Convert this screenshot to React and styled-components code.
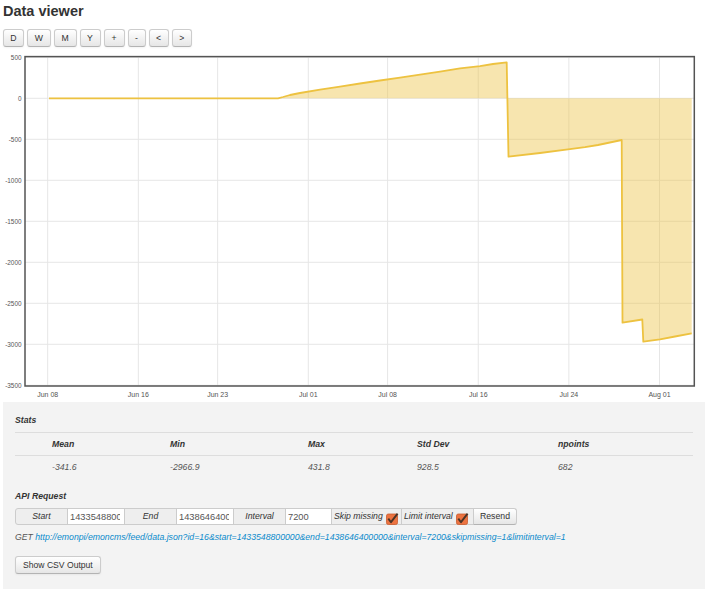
import React from "react";
import styled, { createGlobalStyle } from "styled-components";

const GlobalStyle = createGlobalStyle`
  html, body { margin: 0; padding: 0; background: #fff; overflow: hidden; }
  body { font-family: "Liberation Sans", Arial, sans-serif; color: #333; }
`;

const Page = styled.div`
  width: 709px;
  height: 589px;
  box-sizing: border-box;
  padding: 0 4px 0 3px;
  display: flex;
  flex-direction: column;
`;

const Title = styled.h2`
  margin: 0;
  font-size: 14.5px;
  line-height: 22px;
  font-weight: bold;
  color: #333;
`;

const Toolbar = styled.div`
  display: flex;
  gap: 3px;
  margin-top: 7px;
  height: 18px;
`;

const RangeButton = styled.button`
  box-sizing: border-box;
  width: ${(p) => p.$w}px;
  height: 18px;
  padding: 0;
  margin: 0;
  font: 8.7px/16px "Liberation Sans", Arial, sans-serif;
  color: #333;
  background: linear-gradient(#ffffff, #e6e6e6);
  border: 1px solid #ccc;
  border-bottom-color: #b3b3b3;
  border-radius: 3px;
  box-shadow: inset 0 1px 0 rgba(255, 255, 255, 0.2), 0 1px 2px rgba(0, 0, 0, 0.05);
`;

const ChartSvg = styled.svg`
  display: block;
  width: 702px;
  height: 355px;
  flex: none;
`;

const Panel = styled.div`
  flex: 1;
  background: #f3f3f3;
  padding: 12px 12px 0;
  display: flex;
  flex-direction: column;
  align-items: flex-start;
`;

const SectionLabel = styled.div`
  font-size: 8.7px;
  line-height: 12px;
  font-weight: bold;
  font-style: italic;
  color: #333;
  margin-top: ${(p) => p.$top || 0}px;
`;

const StatsTable = styled.div`
  align-self: stretch;
  display: grid;
  grid-template-columns: 29px 118px 138px 109px 141px 1fr;
  margin-top: 6px;
`;

const StatsCell = styled.div`
  box-sizing: border-box;
  height: 23px;
  border-top: 1px solid #ddd;
  padding-left: 8px;
  font-size: 8.7px;
  line-height: 22px;
  font-style: italic;
  font-weight: ${(p) => (p.$head ? "bold" : "normal")};
  color: ${(p) => (p.$head ? "#333" : "#555")};
  white-space: nowrap;
`;

const RequestRow = styled.div`
  display: flex;
  margin-top: 6px;
  height: 17px;
  && > * + * {
    margin-left: -1px;
  }
`;

const AddOn = styled.div`
  box-sizing: border-box;
  width: ${(p) => p.$w}px;
  height: 17px;
  background: #eee;
  border: 1px solid #ccc;
  border-radius: ${(p) => (p.$first ? "3px 0 0 3px" : "0")};
  font-size: 8.7px;
  line-height: 15px;
  font-style: italic;
  color: #333;
  text-align: center;
`;

const CheckAddOn = styled(AddOn)`
  display: flex;
  align-items: flex-start;
  gap: 3px;
  padding-left: 2px;
  text-align: left;
  white-space: nowrap;
  overflow: visible;
`;

const CheckBox = styled.svg`
  width: 12px;
  height: 12px;
  margin-top: 4px;
  flex: none;
  overflow: visible;
`;

const Field = styled.input`
  box-sizing: border-box;
  width: ${(p) => p.$w}px;
  height: 17px;
  padding: 0 4px 0 2px;
  border: 1px solid #ccc;
  border-radius: 0;
  background: #fff;
  font: 9.3px/15px "Liberation Sans", Arial, sans-serif;
  color: #555;
  outline: none;
`;

const ResendButton = styled.button`
  box-sizing: border-box;
  width: 44px;
  height: 17px;
  padding: 0;
  border: 1px solid #ccc;
  border-bottom-color: #b3b3b3;
  border-radius: 0 3px 3px 0;
  background: linear-gradient(#ffffff, #e6e6e6);
  font: 8.7px/15px "Liberation Sans", Arial, sans-serif;
  color: #333;
`;

const RequestLine = styled.div`
  margin-top: 6px;
  font-size: 8.7px;
  line-height: 12px;
  font-style: italic;
  color: #555;
  white-space: nowrap;
`;

const Link = styled.a`
  color: #0a8acb;
  text-decoration: none;
`;

const CsvButton = styled.button`
  box-sizing: border-box;
  height: 18px;
  margin: 13px 0 0;
  padding: 0 7px;
  border: 1px solid #ccc;
  border-bottom-color: #b3b3b3;
  border-radius: 3px;
  background: linear-gradient(#ffffff, #e6e6e6);
  box-shadow: inset 0 1px 0 rgba(255, 255, 255, 0.2), 0 1px 2px rgba(0, 0, 0, 0.05);
  font: 8.6px/16px "Liberation Sans", Arial, sans-serif;
  color: #333;
`;

const buttons = [
  ["D", 21],
  ["W", 23.5],
  ["M", 23],
  ["Y", 21],
  ["+", 21],
  ["-", 18],
  ["<", 20],
  [">", 20.5],
];

const yTicks = [500, 0, -500, -1000, -1500, -2000, -2500, -3000, -3500];
const yOf = (v) => 98.3 - v * 0.082;
const xTicks = [
  ["Jun 08", 0],
  ["Jun 16", 8],
  ["Jun 23", 15],
  ["Jul 01", 23],
  ["Jul 08", 30],
  ["Jul 16", 38],
  ["Jul 24", 46],
  ["Aug 01", 54],
];
const xOf = (d) => 47.7 + 11.33 * d;

const series = [
  [49, 98.3],
  [278, 98.3],
  [283, 97],
  [290, 95],
  [300, 93],
  [320, 89.6],
  [340, 86.6],
  [360, 83.5],
  [380, 80.5],
  [400, 77.6],
  [420, 74.6],
  [440, 71.7],
  [460, 68.4],
  [480, 66.2],
  [493, 64],
  [506.7, 62.4],
  [508.5, 156.7],
  [540, 153],
  [568, 149.3],
  [585, 147.2],
  [598, 145],
  [621.7, 140],
  [622.5, 322.7],
  [642.3, 319.5],
  [643.3, 341.7],
  [660, 339.3],
  [675, 336.5],
  [691.7, 333.4],
];

const linePath = series.map((p, i) => `${i ? "L" : "M"}${p[0]},${p[1]}`).join(" ");
const fillPath = `${linePath} L691.7,98.3 L49,98.3 Z`;

const stats = [
  ["Mean", "-341.6"],
  ["Min", "-2966.9"],
  ["Max", "431.8"],
  ["Std Dev", "928.5"],
  ["npoints", "682"],
];

const url =
  "http://emonpi/emoncms/feed/data.json?id=16&start=1433548800000&end=1438646400000&interval=7200&skipmissing=1&limitinterval=1";

function Check() {
  return (
    <CheckBox viewBox="0 0 12 12">
      <rect x="0.5" y="1" width="11" height="10.5" rx="1.8" fill="#ec7341" stroke="#c95a2c" strokeWidth="0.8" />
      <polyline points="2.3,5.6 5,9.2 11.6,0.6" fill="none" stroke="#4a3427" strokeWidth="1.9" strokeLinejoin="round" />
    </CheckBox>
  );
}

function Chart() {
  return (
    <ChartSvg viewBox="3 47 702 355">
      {yTicks.map((v) => (
        <line key={"h" + v} x1="25" x2="694" y1={yOf(v)} y2={yOf(v)} stroke="#e6e6e6" strokeWidth="1" />
      ))}
      {xTicks.map(([l, d]) => (
        <line key={"v" + l} x1={xOf(d)} x2={xOf(d)} y1="57" y2="386" stroke="#e6e6e6" strokeWidth="1" />
      ))}
      <path d={fillPath} fill="rgba(237,194,64,0.42)" stroke="none" />
      <path d={linePath} fill="none" stroke="#edc240" strokeWidth="1.8" strokeLinejoin="round" />
      <rect x="25" y="56.6" width="669.3" height="329.4" fill="none" stroke="#545454" strokeWidth="1.5" />
      {yTicks.map((v) => (
        <text
          key={"yl" + v}
          x="21.5"
          y={yOf(v)}
          textAnchor="end"
          dominantBaseline="central"
          fontFamily="Liberation Sans, Arial, sans-serif"
          fontSize="6.4"
          fill="#545454"
        >
          {v}
        </text>
      ))}
      {xTicks.map(([l, d]) => (
        <text
          key={"xl" + l}
          x={xOf(d)}
          y="394.3"
          textAnchor="middle"
          dominantBaseline="central"
          fontFamily="Liberation Sans, Arial, sans-serif"
          fontSize="7"
          fill="#545454"
        >
          {l}
        </text>
      ))}
    </ChartSvg>
  );
}

export default function App() {
  return (
    <>
      <GlobalStyle />
      <Page>
        <Title>Data viewer</Title>
        <Toolbar>
          {buttons.map(([t, w]) => (
            <RangeButton key={t} $w={w}>
              {t}
            </RangeButton>
          ))}
        </Toolbar>
        <Chart />
        <Panel>
          <SectionLabel>Stats</SectionLabel>
          <StatsTable>
            <StatsCell $head />
            {stats.map(([h]) => (
              <StatsCell key={h} $head>
                {h}
              </StatsCell>
            ))}
            <StatsCell />
            {stats.map(([h, v]) => (
              <StatsCell key={h + "v"}>{v}</StatsCell>
            ))}
          </StatsTable>
          <SectionLabel $top={12}>API Request</SectionLabel>
          <RequestRow>
            <AddOn $w={53} $first>Start</AddOn>
            <Field $w={58} defaultValue="1433548800" />
            <AddOn $w={53}>End</AddOn>
            <Field $w={58} defaultValue="1438646400" />
            <AddOn $w={53}>Interval</AddOn>
            <Field $w={47} defaultValue="7200" />
            <CheckAddOn $w={71}>
              <span>Skip missing</span>
              <Check />
            </CheckAddOn>
            <CheckAddOn $w={73}>
              <span>Limit interval</span>
              <Check />
            </CheckAddOn>
            <ResendButton>Resend</ResendButton>
          </RequestRow>
          <RequestLine>
            GET <Link href="#">{url}</Link>
          </RequestLine>
          <CsvButton>Show CSV Output</CsvButton>
        </Panel>
      </Page>
    </>
  );
}
